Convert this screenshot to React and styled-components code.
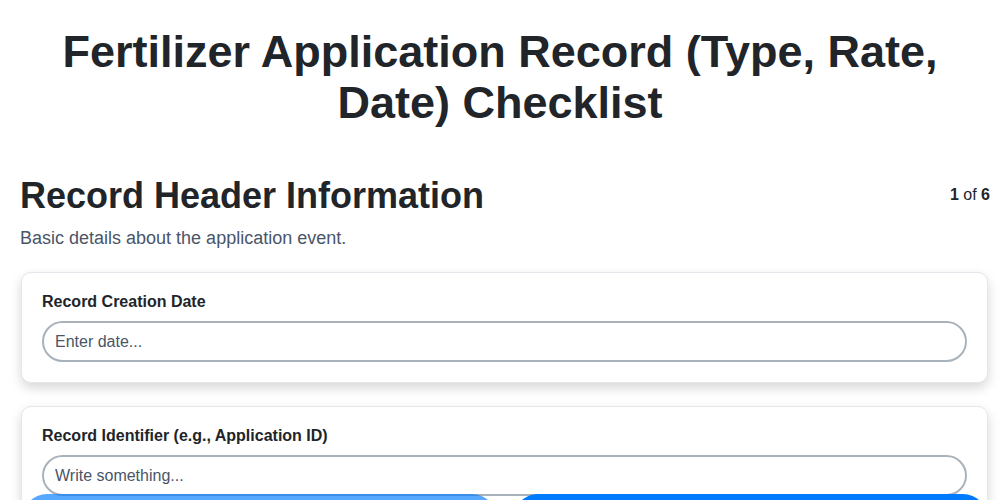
import React, { useState } from "react";
import styled, { createGlobalStyle } from "styled-components";

const GlobalStyle = createGlobalStyle`
  * { box-sizing: border-box; }
  body {
    margin: 0;
    background: #ffffff;
    font-family: "Liberation Sans", Arial, sans-serif;
    color: #212529;
  }
`;

const Page = styled("div")`
  padding: 22px 10px 80px 20px;
`;

const Title = styled("h1")`
  margin: 4px 15px 46px 5px;
  text-align: center;
  font-size: 45px;
  line-height: 51px;
  font-weight: 700;
  color: #212529;
`;

const SectionHead = styled("div")`
  display: flex;
  justify-content: space-between;
  align-items: flex-start;
`;

const SectionTitle = styled("h2")`
  margin: 0;
  font-size: 36px;
  line-height: 44px;
  font-weight: 700;
  color: #212529;
`;

const Counter = styled("div")`
  font-size: 16px;
  margin-top: 12px;
  color: #212529;
  b {
    font-weight: 700;
  }
`;

const SectionDesc = styled("p")`
  margin: 10px 0 23px;
  font-size: 18px;
  color: #4a5568;
`;

const FieldList = styled("div")`
  display: flex;
  flex-direction: column;
  gap: 23px;
`;

const Card = styled("div")`
  margin-left: 1px;
  margin-right: 2px;
  background: #ffffff;
  border: 1px solid #e6e6ec;
  border-radius: 10px;
  padding: 20px;
  box-shadow: 0 5px 12px rgba(0, 0, 0, 0.16);
`;

const Label = styled("label")`
  display: block;
  font-size: 16px;
  font-weight: 700;
  color: #212529;
  margin-bottom: 10px;
`;

const Input = styled("input")`
  display: block;
  width: 100%;
  height: 41px;
  padding: 0 11px;
  border: 2px solid #a9b2bb;
  border-radius: 21px;
  font-family: "Liberation Sans", Arial, sans-serif;
  font-size: 16px;
  color: #212529;
  background: #fff;
  outline: none;
  &::placeholder {
    color: #4a5568;
  }
`;

const NavBar = styled("div")`
  position: fixed;
  left: 22px;
  right: 12px;
  bottom: -44px;
  display: flex;
  gap: 16px;
`;

const NavButton = styled("button")`
  flex: 1;
  height: 50px;
  border: none;
  border-radius: 25px;
  background: #007bff;
  opacity: ${(props) => (props.disabled ? 0.66 : 1)};
  color: #fff;
  font-size: 17px;
  font-weight: 700;
  font-family: "Liberation Sans", Arial, sans-serif;
`;

const fields = [
  { label: "Record Creation Date", placeholder: "Enter date..." },
  {
    label: "Record Identifier (e.g., Application ID)",
    placeholder: "Write something...",
  },
  { label: "Farm / Operation Name", placeholder: "Write something..." },
];

export default function App() {
  const [values, setValues] = useState({});

  return (
    <Page>
      <GlobalStyle />
      <Title>Fertilizer Application Record (Type, Rate, Date) Checklist</Title>
      <SectionHead>
        <SectionTitle>Record Header Information</SectionTitle>
        <Counter>
          <b>1</b> of <b>6</b>
        </Counter>
      </SectionHead>
      <SectionDesc>Basic details about the application event.</SectionDesc>
      <FieldList>
        {fields.map((f, i) => (
          <Card key={f.label}>
            <Label>{f.label}</Label>
            <Input
              placeholder={f.placeholder}
              value={values[i] || ""}
              onChange={(e) => setValues({ ...values, [i]: e.target.value })}
            />
          </Card>
        ))}
      </FieldList>
      <NavBar>
        <NavButton disabled>Previous</NavButton>
        <NavButton>Next</NavButton>
      </NavBar>
    </Page>
  );
}
